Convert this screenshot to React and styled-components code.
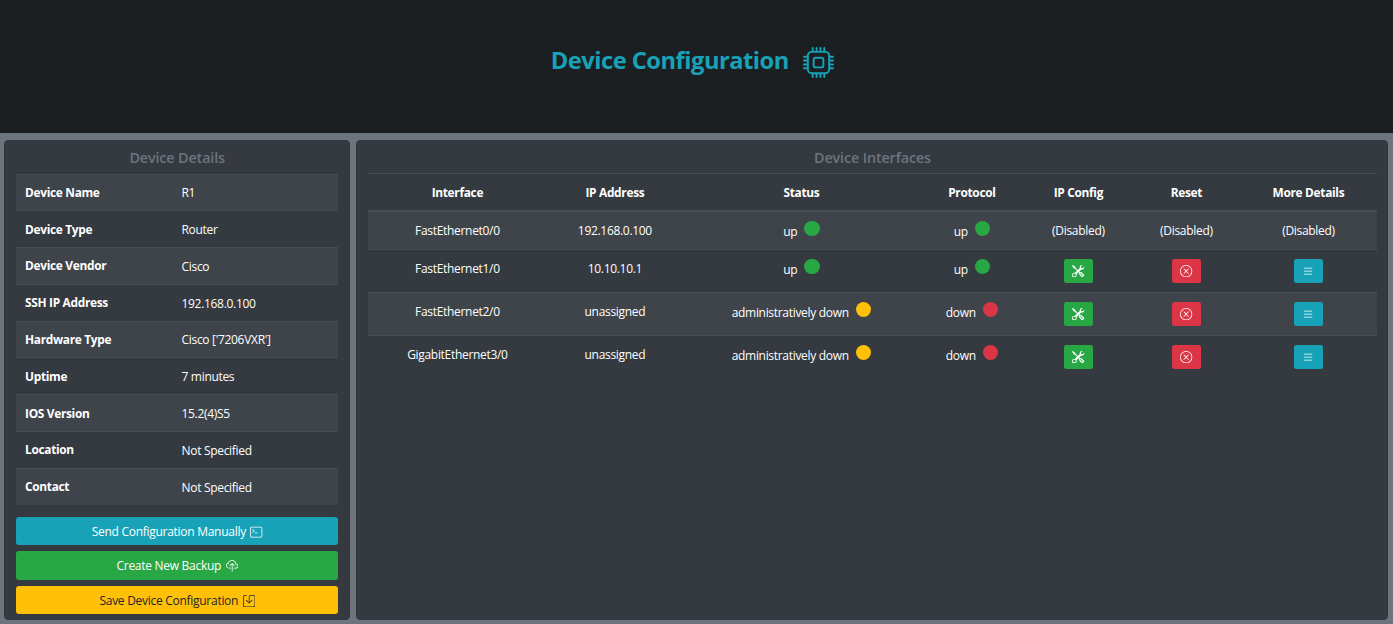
import React from "react";
import styled, { createGlobalStyle } from "styled-components";
import { BsCpu, BsTerminal, BsCloudUpload, BsSave, BsTools, BsXCircle, BsList } from "react-icons/bs";

const c = {
  info: "#17a2b8",
  success: "#28a745",
  danger: "#dc3545",
  warning: "#ffc107",
  dark: "#343a40",
  stripe: "#3f444a",
  line: "#454d55",
};

const GlobalStyle = createGlobalStyle`
  * { box-sizing: border-box; }
  body {
    margin: 0;
    background: #6c757d;
    color: #fff;
    font-family: "Open Sans", "Noto Sans", sans-serif;
    font-size: 12px;
    line-height: 18px;
    letter-spacing: -0.31px;
    overflow: hidden;
  }
`;

const Page = styled.div`
  display: flex;
  flex-direction: column;
  height: 624px;
`;

const Header = styled.header`
  display: flex;
  justify-content: center;
  height: 133px;
  padding: 43px 8px 0 0;
  background: #1b1f21;
  color: ${c.info};
`;

const Title = styled.h1`
  margin: 0;
  font-size: 23.7px;
  font-weight: 700;
  line-height: 34px;
  letter-spacing: -0.5px;
  white-space: nowrap;
`;

const TitleIcon = styled(BsCpu)`
  width: 31px;
  height: 31px;
  margin: 4px 0 0 14.5px;
`;

const Panels = styled.main`
  display: flex;
  flex: 1;
  gap: 6px;
  padding: 7px 5px 4px 4px;
`;

const Panel = styled.section`
  flex: ${(p) => (p.$width ? `0 0 ${p.$width}px` : "1")};
  padding: 0 ${(p) => (p.$width ? 11 : 10.5)}px 0 11px;
  border: 1px solid #31363c;
  border-radius: 4px;
  background: ${c.dark};
`;

const PanelTitle = styled.h2`
  height: ${(p) => p.$height}px;
  margin: 0;
  padding-top: 5px;
  color: #6c757d;
  font-size: 14.4px;
  font-weight: 600;
  line-height: 24px;
  letter-spacing: -0.15px;
  text-align: center;
`;

const DetailRow = styled.div`
  display: grid;
  grid-template-columns: 156.5px 1fr;
  align-items: center;
  height: 36.8px;
  padding: 0 9px;
  border-top: 1px solid ${c.line};
  &:nth-child(odd) { background: ${c.stripe}; }
`;

const Label = styled.span`
  margin-top: -1px;
  font-size: 11.9px;
  font-weight: 700;
`;

const Value = styled.span`
  padding-top: 1.5px;
`;

const Actions = styled.div`
  display: flex;
  flex-direction: column;
  gap: 6px;
  margin-top: 12px;
`;

const Action = styled.button`
  display: flex;
  align-items: center;
  justify-content: center;
  gap: 4.5px;
  height: 28.5px;
  padding: 2px 0 0;
  border: 0;
  border-radius: 3px;
  background: ${(p) => c[p.$tone]};
  color: ${(p) => (p.$tone === "warning" ? "#212529" : "#fff")};
  font: inherit;
  letter-spacing: -0.28px;
  svg { width: 12.3px; height: 12.3px; }
`;

const TableRow = styled.div`
  display: grid;
  grid-template-columns: 178px 137px 236px 105px 108px 108px 1fr;
  height: ${(p) => p.$height}px;
  border-top: ${(p) => p.$rule || 1}px solid ${c.line};
  background: ${(p) => (p.$striped ? c.stripe : "transparent")};
`;

const Cell = styled.div`
  display: flex;
  align-items: flex-start;
  justify-content: center;
  padding-top: ${(p) => (p.$text ? 10 : 9)}px;
  font-weight: ${(p) => (p.$head ? 700 : 400)};
  font-size: ${(p) => (p.$head ? 11.9 : 12)}px;
  white-space: nowrap;
`;

const State = styled.span`
  padding-top: 2px;
`;

const Dot = styled.i`
  width: 15.4px;
  height: 15.4px;
  margin-left: 7px;
  border-radius: 50%;
  background: ${(p) => c[p.$tone]};
`;

const IconButton = styled.button`
  display: flex;
  align-items: center;
  justify-content: center;
  width: 28.4px;
  height: 24.4px;
  padding: 0;
  border: 0;
  border-radius: 2.5px;
  background: ${(p) => c[p.$tone]};
  color: #fff;
  svg { width: 12.3px; height: 12.3px; }
`;

const details = [
  ["Device Name", "R1"],
  ["Device Type", "Router"],
  ["Device Vendor", "Cisco"],
  ["SSH IP Address", "192.168.0.100"],
  ["Hardware Type", "Cisco ['7206VXR']"],
  ["Uptime", "7 minutes"],
  ["IOS Version", "15.2(4)S5"],
  ["Location", "Not Specified"],
  ["Contact", "Not Specified"],
];

const columns = ["Interface", "IP Address", "Status", "Protocol", "IP Config", "Reset", "More Details"];

const interfaces = [
  { name: "FastEthernet0/0", ip: "192.168.0.100", status: "up", protocol: "up", locked: true },
  { name: "FastEthernet1/0", ip: "10.10.10.1", status: "up", protocol: "up" },
  { name: "FastEthernet2/0", ip: "unassigned", status: "administratively down", protocol: "down" },
  { name: "GigabitEthernet3/0", ip: "unassigned", status: "administratively down", protocol: "down" },
];

const controls = [
  ["success", BsTools, "IP Config"],
  ["danger", BsXCircle, "Reset"],
  ["info", BsList, "More Details"],
];

function InterfaceRow({ item, index }) {
  return (
    <TableRow $height={item.locked ? 39 : 43} $rule={item.locked ? 2 : 1} $striped={index % 2 === 0}>
      <Cell $text>{item.name}</Cell>
      <Cell $text>{item.ip}</Cell>
      <Cell>
        <State>{item.status}</State>
        <Dot $tone={item.status === "up" ? "success" : "warning"} />
      </Cell>
      <Cell>
        <State>{item.protocol}</State>
        <Dot $tone={item.protocol === "up" ? "success" : "danger"} />
      </Cell>
      {controls.map(([tone, Icon, label]) => (
        <Cell key={label} $text={item.locked}>
          {item.locked ? "(Disabled)" : <IconButton $tone={tone} aria-label={label}><Icon /></IconButton>}
        </Cell>
      ))}
    </TableRow>
  );
}

export default function App() {
  return (
    <Page>
      <GlobalStyle />
      <Header>
        <Title>Device Configuration</Title>
        <TitleIcon />
      </Header>
      <Panels>
        <Panel $width={346.4}>
          <PanelTitle $height={32.5}>Device Details</PanelTitle>
          <div>
            {details.map(([label, value]) => (
              <DetailRow key={label}>
                <Label>{label}</Label>
                <Value>{value}</Value>
              </DetailRow>
            ))}
          </div>
          <Actions>
            <Action $tone="info">Send Configuration Manually <BsTerminal /></Action>
            <Action $tone="success">Create New Backup <BsCloudUpload /></Action>
            <Action $tone="warning">Save Device Configuration <BsSave /></Action>
          </Actions>
        </Panel>
        <Panel>
          <PanelTitle $height={32}>Device Interfaces</PanelTitle>
          <TableRow $height={37}>
            {columns.map((name) => <Cell key={name} $head>{name}</Cell>)}
          </TableRow>
          {interfaces.map((item, i) => <InterfaceRow key={item.name} item={item} index={i} />)}
        </Panel>
      </Panels>
    </Page>
  );
}
